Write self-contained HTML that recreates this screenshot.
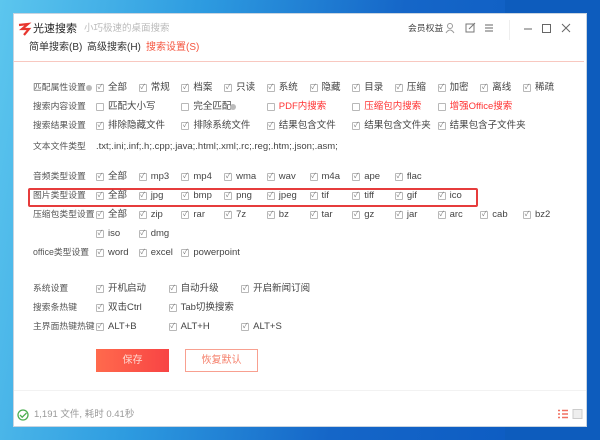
<!DOCTYPE html>
<html><head><meta charset="utf-8"><style>
*{margin:0;padding:0;box-sizing:border-box}
body{width:600px;height:440px;overflow:hidden;position:relative;font-family:"Liberation Sans","Noto Sans CJK SC",sans-serif;background:linear-gradient(100deg,#5cc6ee 0%,#2d9be0 30%,#1566c8 60%,#0a58c0 100%)}
.win{position:absolute;left:13px;top:13px;width:574px;height:414px;background:#fff;border:1px solid #c8d4e0}
.a{position:absolute;white-space:nowrap;font-size:9.5px;color:#444;line-height:12px}
.l{font-size:8.8px;color:#555}
.cb{position:absolute;width:8px;height:8px;border:1px solid #b8b8b8;border-radius:1px;font-size:7px;line-height:6px;color:#777;text-align:center}
.red{color:#f33}
</style></head><body>
<div style="position:absolute;left:505px;top:0;width:95px;height:440px;background:#0d5cbd"></div>
<div class="win">
<svg style="position:absolute;left:4px;top:8px" width="16" height="14" viewBox="0 0 16 14"><path d="M1 3 L10 2 L4 7 L11 7 L6 13" fill="none" stroke="#e8362f" stroke-width="2.2"/></svg>
<div class="a" style="left:19px;top:8px;font-size:11px;color:#222;line-height:14px">光速搜索</div>
<div class="a" style="left:70px;top:9px;font-size:9.5px;color:#bbb">小巧极速的桌面搜索</div>
<div class="a" style="left:15px;top:27px;font-size:10px;color:#333;line-height:14px">简单搜索(B)</div>
<div class="a" style="left:73px;top:27px;font-size:10px;color:#333;line-height:14px">高级搜索(H)</div>
<div class="a" style="left:132px;top:27px;font-size:10px;color:#f5553f;line-height:14px">搜索设置(S)</div>
<div style="position:absolute;left:0;top:47px;width:570px;height:1px;background:#f8c8c0"></div>
<div class="a" style="left:394px;top:8px;font-size:8.8px;color:#444">会员权益</div>
<svg style="position:absolute;left:431px;top:8px" width="70" height="14"><circle cx="5" cy="4" r="2.5" fill="none" stroke="#999"/><path d="M1 11 Q5 5 9 11" fill="none" stroke="#999"/><rect x="21" y="2" width="8" height="8" fill="none" stroke="#777"/><path d="M24 7 L30 1" stroke="#777"/><path d="M40 3h8M40 6h8M40 9h8" stroke="#666"/></svg>
<div style="position:absolute;left:495px;top:6px;width:1px;height:20px;background:#eee"></div>
<svg style="position:absolute;left:508px;top:9px" width="60" height="12"><path d="M2 6h8" stroke="#666"/><rect x="20.5" y="1.5" width="8" height="8" fill="none" stroke="#666"/><path d="M40 1l8 8M48 1l-8 8" stroke="#666"/></svg>
<div style="position:absolute;left:14px;top:174px;width:450px;height:19px;border:2px solid #e63c3c;border-radius:2px"></div>
<div style="position:absolute;left:0;top:376px;width:572px;height:1px;background:#f2f2f2"></div>
<svg style="position:absolute;left:3px;top:395px" width="12" height="12"><circle cx="6" cy="6" r="5" fill="none" stroke="#4caf50" stroke-width="1.3"/><path d="M3 6l2.2 2.2L9.5 4" fill="none" stroke="#4caf50" stroke-width="1.3"/></svg>
<div class="a" style="left:20px;top:395px;font-size:9.5px;color:#999">1,191 文件, 耗时 0.41秒</div>
<svg style="position:absolute;left:544px;top:395px" width="26" height="11"><path d="M0 1.5h2M4 1.5h6M0 5h2M4 5h6M0 8.5h2M4 8.5h6" stroke="#f07060" stroke-width="1.6"/><rect x="15" y="0.5" width="9" height="9" fill="#eee" stroke="#ccc"/></svg>
<div style="position:absolute;left:82px;top:335px;width:73px;height:23px;background:linear-gradient(90deg,#ff6a4d,#f84444)"></div>
<div class="a" style="left:82px;top:341px;width:73px;text-align:center;color:#ffd8d0;font-size:10px">保存</div>
<div style="position:absolute;left:171px;top:335px;width:73px;height:23px;border:1px solid #f8a090"></div>
<div class="a" style="left:171px;top:341px;width:73px;text-align:center;color:#f57f6a;font-size:10px">恢复默认</div>
<div id="c"></div>
</div>
<script>
var rows=[
[87,"匹配属性设置",[[0,"全部"],[1,"常规"],[2,"档案"],[3,"只读"],[4,"系统"],[5,"隐藏"],[6,"目录"],[7,"压缩"],[8,"加密"],[9,"离线"],[10,"稀疏"]]],
[106,"搜索内容设置",[[0,"匹配大小写",0],[2,"完全匹配",0],[4,"PDF内搜索",0,1],[6,"压缩包内搜索",0,1],[8,"增强Office搜索",0,1]]],
[125,"搜索结果设置",[[0,"排除隐藏文件"],[2,"排除系统文件"],[4,"结果包含文件"],[6,"结果包含文件夹"],[8,"结果包含子文件夹"]]],
[176,"音频类型设置",[[0,"全部"],[1,"mp3"],[2,"mp4"],[3,"wma"],[4,"wav"],[5,"m4a"],[6,"ape"],[7,"flac"]]],
[195,"图片类型设置",[[0,"全部"],[1,"jpg"],[2,"bmp"],[3,"png"],[4,"jpeg"],[5,"tif"],[6,"tiff"],[7,"gif"],[8,"ico"]]],
[214,"压缩包类型设置",[[0,"全部"],[1,"zip"],[2,"rar"],[3,"7z"],[4,"bz"],[5,"tar"],[6,"gz"],[7,"jar"],[8,"arc"],[9,"cab"],[10,"bz2"]]],
[233,"",[[0,"iso"],[1,"dmg"]]],
[252,"office类型设置",[[0,"word"],[1,"excel"],[2,"powerpoint"]]],
[288,"系统设置",[[0,"开机启动"],[1.7,"自动升级"],[3.4,"开启新闻订阅"]]],
[307,"搜索条热键",[[0,"双击Ctrl"],[1.7,"Tab切换搜索"]]],
[326,"主界面热键热键",[[0,"ALT+B"],[1.7,"ALT+H"],[3.4,"ALT+S"]]]];
var h="";
rows.forEach(function(r){var y=r[0]-13;
if(r[1])h+='<div class="a l" style="left:19px;top:'+(y-7)+'px">'+r[1]+'</div>';
r[2].forEach(function(it){var x=86+it[0]*42.7;var chk=it[2]!==0;
h+='<div class="cb" style="left:'+(x-4)+'px;top:'+(y-4)+'px">'+(chk?'✓':'')+'</div>';
h+='<div class="a'+(it[3]?' red':'')+'" style="left:'+(x+8)+'px;top:'+(y-6)+'px">'+it[1]+'</div>';});});
h+='<div class="a l" style="left:19px;top:'+(146-13-7)+'px">文本文件类型</div>';
h+='<div class="a" style="left:82px;top:'+(146-13-6)+'px;color:#444">.txt;.ini;.inf;.h;.cpp;.java;.html;.xml;.rc;.reg;.htm;.json;.asm;</div>';
h+='<div style="position:absolute;left:72px;top:71px;width:6px;height:6px;border-radius:50%;background:#bbb"></div>';
h+='<div style="position:absolute;left:216px;top:90px;width:6px;height:6px;border-radius:50%;background:#bbb"></div>';
document.getElementById("c").innerHTML=h;
</script>
</body></html>
